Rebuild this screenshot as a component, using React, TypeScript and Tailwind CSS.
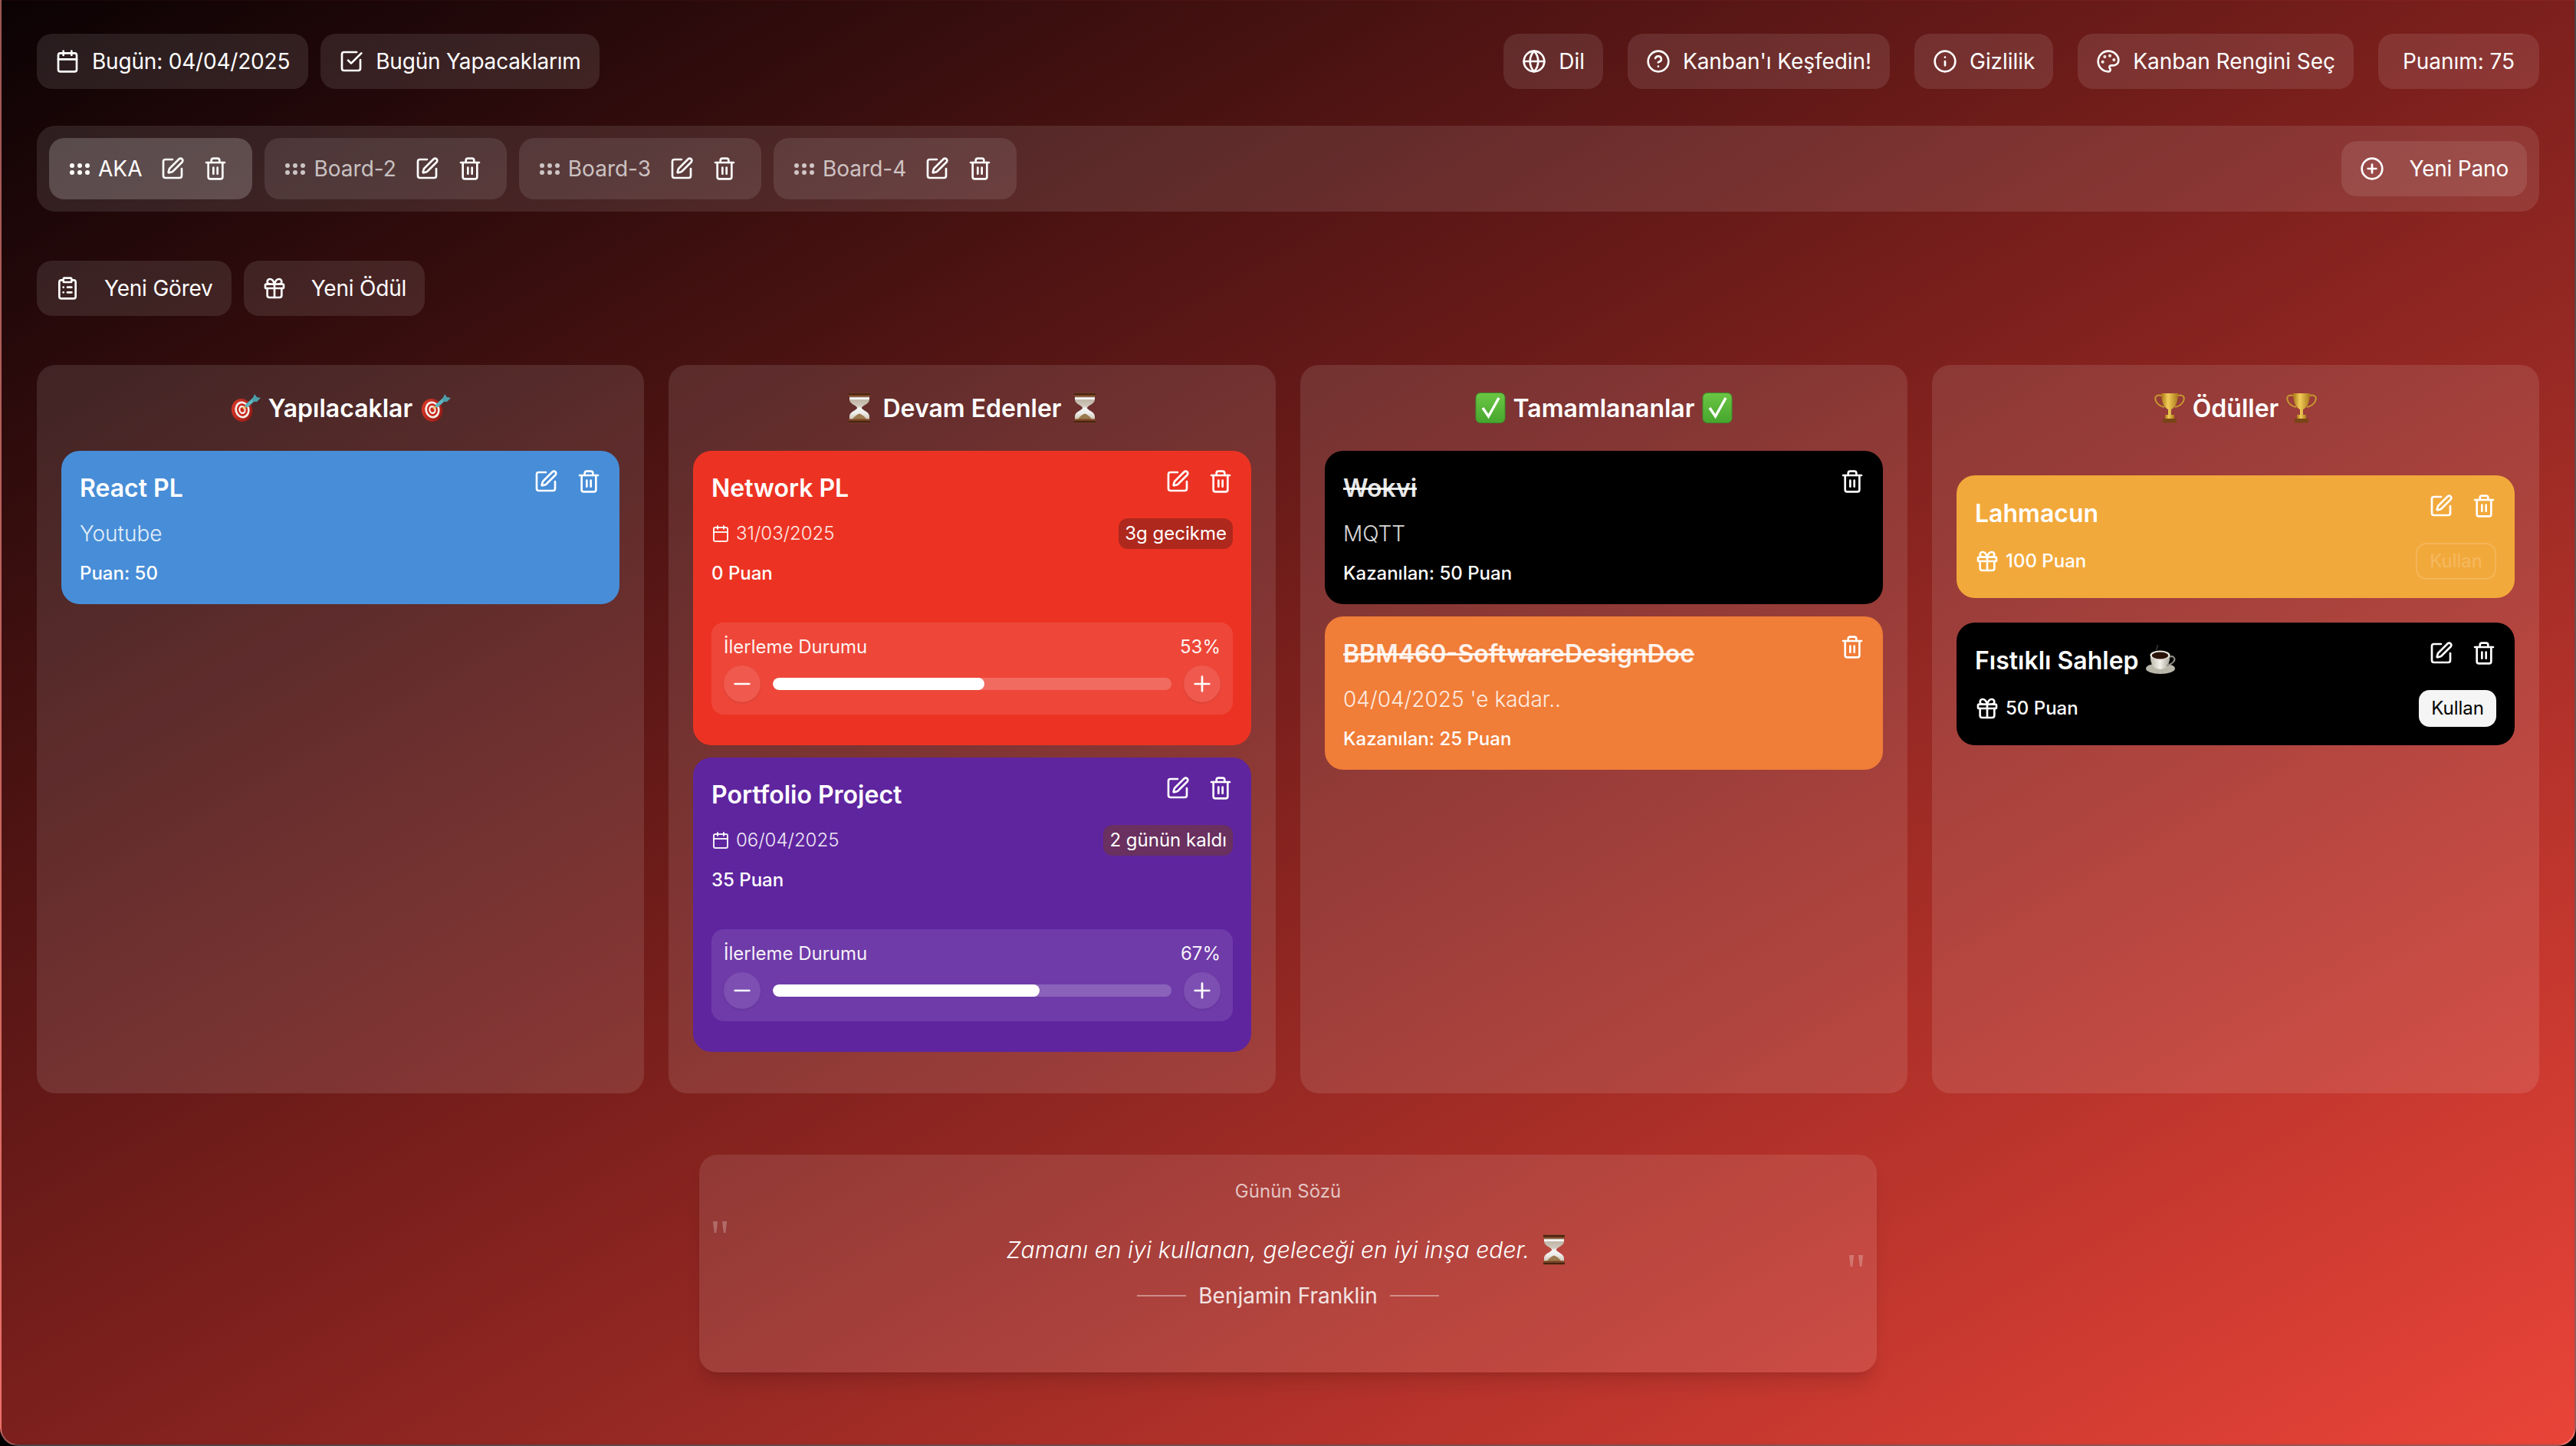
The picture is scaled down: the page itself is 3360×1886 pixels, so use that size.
import React from "react";
import {
  Calendar, SquareCheckBig, Globe, CircleHelp, Info, Palette, CirclePlus, ClipboardList,
  Gift, SquarePen, Trash2, Minus, Plus,
} from "lucide-react";

function Grip() {
  return (
    <svg width="26" height="15" viewBox="0 0 26 15" className="ml-[3px] shrink-0" fill="currentColor">
      {[3, 13, 23].map((x) =>
        [3, 12].map((y) => <circle key={`${x}-${y}`} cx={x} cy={y} r="3" />)
      )}
    </svg>
  );
}

function Target({ id }: { id: string }) {
  return (
    <svg width="40" height="40" viewBox="0 0 40 40" className="shrink-0">
      <defs>
        <linearGradient id={id} x1="0" y1="0" x2="1" y2="1">
          <stop offset="0" stopColor="#e23a2c" />
          <stop offset="1" stopColor="#8f1510" />
        </linearGradient>
      </defs>
      <ellipse cx="15.5" cy="23" rx="13.5" ry="15" transform="rotate(-15 15.5 23)" fill={`url(#${id})`} />
      <ellipse cx="16" cy="22.5" rx="9.6" ry="11" transform="rotate(-15 16 22.5)" fill="#f5efe9" />
      <ellipse cx="16" cy="22.5" rx="7" ry="8.2" transform="rotate(-15 16 22.5)" fill="#c9281d" />
      <ellipse cx="16" cy="22.5" rx="4.6" ry="5.6" transform="rotate(-15 16 22.5)" fill="#f5efe9" />
      <ellipse cx="16" cy="22.5" rx="2.5" ry="3.2" transform="rotate(-15 16 22.5)" fill="#c9281d" />
      <path d="M17 21 L30 11" stroke="#e8c25a" strokeWidth="2" />
      <path d="M22 17 L31 9" stroke="#5fb3bd" strokeWidth="4.5" strokeLinecap="round" />
      <path d="M29 9 L32 2 L35 6 L40 7 L35 12 L30 12 Z" fill="#4b9ea9" />
    </svg>
  );
}

function Hourglass({ id }: { id: string }) {
  return (
    <svg width="40" height="40" viewBox="0 0 40 40" className="shrink-0">
      <defs>
        <linearGradient id={id} x1="0" y1="0" x2="0" y2="1">
          <stop offset="0" stopColor="#b5a998" />
          <stop offset="0.42" stopColor="#cfc8bc" />
          <stop offset="0.52" stopColor="#f4f4f4" />
          <stop offset="0.72" stopColor="#ececea" />
          <stop offset="1" stopColor="#c9bda9" />
        </linearGradient>
      </defs>
      <path d="M7 4 H33 V9 C33 15 24 16.5 22.8 20 C24 23.5 33 25 33 31 V36 H7 V31 C7 25 16 23.5 17.2 20 C16 16.5 7 15 7 9 Z" fill={`url(#${id})`} />
      <rect x="7" y="6.5" width="26" height="2.6" fill="#f6f6f6" />
      <path d="M11 35 C13 31 17 28.5 20 27.5 C23 28.5 27 31 29 35 Z" fill="#9c7a50" />
      <rect x="6" y="0.5" width="28" height="5" rx="1.5" fill="#7a4423" />
      <rect x="6" y="1.2" width="28" height="1.6" fill="#3a1d0e" />
      <rect x="6" y="34.5" width="28" height="5" rx="1.5" fill="#7a4423" />
      <rect x="6" y="37.2" width="28" height="1.6" fill="#3a1d0e" />
    </svg>
  );
}

function Check({ id }: { id: string }) {
  return (
    <svg width="40" height="40" viewBox="0 0 40 40" className="shrink-0">
      <defs>
        <linearGradient id={id} x1="0" y1="0" x2="0" y2="1">
          <stop offset="0" stopColor="#6cc644" />
          <stop offset="1" stopColor="#46a62e" />
        </linearGradient>
      </defs>
      <rect x="1" y="0.5" width="38" height="39" rx="6" fill={`url(#${id})`} stroke="#3a8f28" strokeWidth="1" />
      <path d="M10 20 L17.5 31 L31 7" fill="none" stroke="#fff" strokeWidth="3.4" strokeLinejoin="miter" />
    </svg>
  );
}

function Trophy({ id }: { id: string }) {
  return (
    <svg width="40" height="40" viewBox="0 0 40 40" className="shrink-0">
      <defs>
        <linearGradient id={id} x1="0" y1="0" x2="1" y2="0">
          <stop offset="0" stopColor="#a87416" />
          <stop offset="0.4" stopColor="#f2cd58" />
          <stop offset="1" stopColor="#a9781b" />
        </linearGradient>
      </defs>
      <path d="M10 4 C2 2 0 6 2 11 C4 16 9 18 13 19 M30 4 C38 2 40 6 38 11 C36 16 31 18 27 19" fill="none" stroke="#c7982f" strokeWidth="2" />
      <path d="M9 1 H31 C31 13 27 20 22 22 V29 H18 V22 C13 20 9 13 9 1 Z" fill={`url(#${id})`} />
      <rect x="14" y="29" width="12" height="5" fill={`url(#${id})`} />
      <rect x="11" y="34" width="18" height="5.5" fill="#7a4416" />
    </svg>
  );
}

function Coffee({ id }: { id: string }) {
  return (
    <svg width="40" height="40" viewBox="0 0 40 40" className="shrink-0">
      <defs>
        <linearGradient id={id} x1="0" y1="0" x2="1" y2="0">
          <stop offset="0" stopColor="#bdb9ad" />
          <stop offset="0.5" stopColor="#f2f0e8" />
          <stop offset="1" stopColor="#a9a69c" />
        </linearGradient>
      </defs>
      <path d="M14 8 C12 5 17 5 15 1" fill="none" stroke="#444" strokeWidth="1.2" />
      <ellipse cx="19" cy="32" rx="19" ry="7" fill="#b9b6aa" />
      <path d="M6 14 H31 C32 24 28 33 18.5 33 C9 33 5 24 6 14 Z" fill={`url(#${id})`} />
      <path d="M30 17 C37 14 39 20 36 23 C34 26 30 27 27 28" fill="none" stroke="#8f8c84" strokeWidth="2" />
      <ellipse cx="18.5" cy="14.5" rx="13" ry="6" fill="#eeece4" />
      <ellipse cx="18.5" cy="15" rx="10.8" ry="4.5" fill="#2a1409" />
    </svg>
  );
}

function TopButton({ icon, label, wide, right }: { icon?: React.ReactNode; label: string; wide?: boolean; right?: boolean }) {
  return (
    <div className={`flex h-[72px] items-center gap-4 rounded-[20px] bg-white/10 text-[28px] leading-10 font-normal text-white whitespace-nowrap ${right ? "tracking-[-0.05px]" : "tracking-[-0.2px]"} ${wide ? "px-8" : "px-6"}`}>
      {icon}
      <span>{label}</span>
    </div>
  );
}

function ActionButton({ icon, label }: { icon: React.ReactNode; label: string }) {
  return (
    <div className="flex h-[72px] items-center gap-8 rounded-[20px] bg-white/10 px-6 text-[28px] leading-10 tracking-[-0.2px] text-white whitespace-nowrap">
      {icon}
      <span>{label}</span>
    </div>
  );
}

function Tab({ label, active }: { label: string; active?: boolean }) {
  return (
    <div className={`flex h-20 items-center rounded-[20px] pr-8 pl-6 text-[28px] leading-10 whitespace-nowrap ${active ? "bg-white/20 text-white" : "bg-white/10 text-white/70"}`}>
      <Grip />
      <span className="ml-[11px]">{label}</span>
      <div className="ml-6 flex gap-6 text-white">
        <SquarePen size={32} />
        <Trash2 size={32} />
      </div>
    </div>
  );
}

function CardIcons({ edit = true }: { edit?: boolean }) {
  return (
    <div className="flex shrink-0 gap-6 text-white">
      {edit && <SquarePen size={32} />}
      <Trash2 size={32} />
    </div>
  );
}

function Column({ icon, title, children, odul }: { icon: (id: string) => React.ReactNode; title: string; children?: React.ReactNode; odul?: boolean }) {
  const key = title.replace(/\s+/g, "-");
  return (
    <div className="flex min-w-0 flex-1 flex-col rounded-[24px] bg-white/[0.11] p-8">
      <h2 className="mb-8 flex h-12 items-center justify-center gap-[10px] text-[32px] leading-12 font-semibold text-white">
        {icon(key + "-a")}
        <span className="pt-[2px]">{title}</span>
        {icon(key + "-b")}
      </h2>
      <div className={`flex flex-col ${odul ? "gap-8 pt-8" : "gap-4"}`}>{children}</div>
    </div>
  );
}

function SimpleCard({ title, sub, points, bg, done }: { title: string; sub: string; points: string; bg: string; done?: boolean }) {
  return (
    <div className={`rounded-[24px] p-6 text-white ${bg}`}>
      <div className="flex items-start justify-between">
        <div className={`h-12 text-[32px] leading-[50px] font-semibold ${done ? "text-white/90 line-through" : ""}`}>{title}</div>
        <CardIcons edit={!done} />
      </div>
      <div className="mt-4 text-[28px] leading-10 font-light text-white/85">{sub}</div>
      <div className="mt-4 text-[24px] leading-8 font-medium">{points}</div>
    </div>
  );
}

function ProgressCard({ title, date, badge, badgeBg, points, pct, bg }: { title: string; date: string; badge: string; badgeBg: string; points: string; pct: number; bg: string }) {
  return (
    <div className={`rounded-[24px] px-6 pt-6 pb-10 text-white ${bg}`}>
      <div className="flex items-start justify-between">
        <div className="h-12 text-[32px] leading-[50px] font-semibold">{title}</div>
        <CardIcons />
      </div>
      <div className="mt-4 flex h-10 items-center justify-between">
        <div className="flex items-center gap-2 text-[24px] leading-8 font-light text-white/90">
          <Calendar size={24} />
          <span>{date}</span>
        </div>
        <div className={`flex h-10 items-center rounded-xl px-2 text-[24px] leading-8 ${badgeBg}`}>{badge}</div>
      </div>
      <div className="mt-4 text-[24px] leading-8 font-medium">{points}</div>
      <div className="mt-12 rounded-2xl bg-white/10 p-4">
        <div className="flex justify-between text-[24px] leading-8 font-normal text-white/95">
          <span>İlerleme Durumu</span>
          <span>{pct}%</span>
        </div>
        <div className="mt-2 flex items-center gap-4">
          <div className="flex size-12 shrink-0 items-center justify-center rounded-full bg-white/10 shadow-sm"><Minus size={32} /></div>
          <div className="h-4 flex-1 overflow-hidden rounded-full bg-white/20">
            <div className="h-full rounded-full bg-white" style={{ width: `${pct}%` }} />
          </div>
          <div className="flex size-12 shrink-0 items-center justify-center rounded-full bg-white/10 shadow-sm"><Plus size={32} /></div>
        </div>
      </div>
    </div>
  );
}

function RewardCard({ title, points, bg, enabled, extra }: { title: string; points: string; bg: string; enabled?: boolean; extra?: React.ReactNode }) {
  return (
    <div className={`rounded-[24px] p-6 text-white ${bg}`}>
      <div className="flex items-start justify-between">
        <div className="flex h-12 items-center gap-[9px] text-[32px] leading-12 font-semibold">
          <span className="pt-1">{title}</span>
          {extra}
        </div>
        <CardIcons />
      </div>
      <div className="mt-4 flex h-12 items-center justify-between">
        <div className="flex items-center gap-2 text-[24px] leading-8 font-medium">
          <Gift size={32} />
          <span>{points}</span>
        </div>
        {enabled ? (
          <div className="flex h-12 items-center rounded-[14px] bg-[#f5f5f5] px-4 text-[24px] leading-8 font-normal text-black">Kullan</div>
        ) : (
          <div className="flex h-12 items-center rounded-[14px] border-2 border-white/15 px-4 text-[24px] leading-8 font-normal text-white/20">Kullan</div>
        )}
      </div>
    </div>
  );
}

export default function App() {
  return (
    <div className="h-[1886px] w-full bg-black font-['Inter',sans-serif]">
      <div className="h-full w-full rounded-b-[24px] border-x-2 border-b-2 border-white/25 bg-[linear-gradient(to_bottom_right,#0b0204_0%,#7d201d_50%,#ea4438_100%)] px-[46px] pt-[44px]">
        <header className="flex justify-between">
          <div className="flex gap-4">
            <TopButton icon={<Calendar size={32} />} label="Bugün: 04/04/2025" />
            <TopButton icon={<SquareCheckBig size={32} />} label="Bugün Yapacaklarım" />
          </div>
          <div className="flex gap-8">
            <TopButton right icon={<Globe size={32} />} label="Dil" />
            <TopButton right icon={<CircleHelp size={32} />} label="Kanban'ı Keşfedin!" />
            <TopButton right icon={<Info size={32} />} label="Gizlilik" />
            <TopButton right icon={<Palette size={32} />} label="Kanban Rengini Seç" />
            <TopButton right label="Puanım: 75" wide />
          </div>
        </header>

        <section className="mt-12 flex h-28 items-center justify-between rounded-[24px] bg-white/10 px-4">
          <div className="flex gap-4">
            <Tab label="AKA" active />
            <Tab label="Board-2" />
            <Tab label="Board-3" />
            <Tab label="Board-4" />
          </div>
          <ActionButton icon={<CirclePlus size={32} />} label="Yeni Pano" />
        </section>

        <div className="mt-16 flex gap-4">
          <ActionButton icon={<ClipboardList size={32} />} label="Yeni Görev" />
          <ActionButton icon={<Gift size={32} />} label="Yeni Ödül" />
        </div>

        <main className="mt-16 flex h-[950px] gap-8">
          <Column icon={(id) => <Target id={id} />} title="Yapılacaklar">
            <SimpleCard title="React PL" sub="Youtube" points="Puan: 50" bg="bg-[#478dd7]" />
          </Column>
          <Column icon={(id) => <Hourglass id={id} />} title="Devam Edenler">
            <ProgressCard title="Network PL" date="31/03/2025" badge="3g gecikme" badgeBg="bg-[#ae281d]" points="0 Puan" pct={53} bg="bg-[#ec3323]" />
            <ProgressCard title="Portfolio Project" date="06/04/2025" badge="2 günün kaldı" badgeBg="bg-[#693060]" points="35 Puan" pct={67} bg="bg-[#5f259f]" />
          </Column>
          <Column icon={(id) => <Check id={id} />} title="Tamamlananlar">
            <SimpleCard title="Wokvi" sub="MQTT" points="Kazanılan: 50 Puan" bg="bg-black" done />
            <SimpleCard title="BBM460-SoftwareDesignDoc" sub="04/04/2025 'e kadar.." points="Kazanılan: 25 Puan" bg="bg-[#f07d38]" done />
          </Column>
          <Column icon={(id) => <Trophy id={id} />} title="Ödüller" odul>
            <RewardCard title="Lahmacun" points="100 Puan" bg="bg-[#f2a93b]" />
            <RewardCard title="Fıstıklı Sahlep" points="50 Puan" bg="bg-black" enabled extra={<Coffee id="coffee" />} />
          </Column>
        </main>

        <section className="relative mx-auto mt-20 h-[284px] w-[1536px] rounded-[24px] bg-white/10 pt-8 text-center shadow-xl">
          <span className="absolute top-[72px] left-[14px] font-['Liberation_Serif',serif] text-[64px] leading-[72px] text-white/25">"</span>
          <span className="absolute top-[116px] right-[14px] font-['Liberation_Serif',serif] text-[64px] leading-[72px] text-white/25">"</span>
          <div className="text-[24px] leading-8 text-white/70">Günün Sözü</div>
          <div className="mt-9 flex h-12 items-center justify-center gap-3 text-[30px] leading-12 font-light tracking-[0.1px] text-white italic">
            <span>Zamanı en iyi kullanan, geleceği en iyi inşa eder.</span>
            <Hourglass id="quote-hourglass" />
          </div>
          <div className="mt-4 flex h-10 items-center justify-center gap-4 text-[28px] leading-10 text-white/85">
            <span className="h-[2px] w-16 bg-white/40" />
            <span>Benjamin Franklin</span>
            <span className="h-[2px] w-16 bg-white/40" />
          </div>
        </section>
      </div>
    </div>
  );
}
